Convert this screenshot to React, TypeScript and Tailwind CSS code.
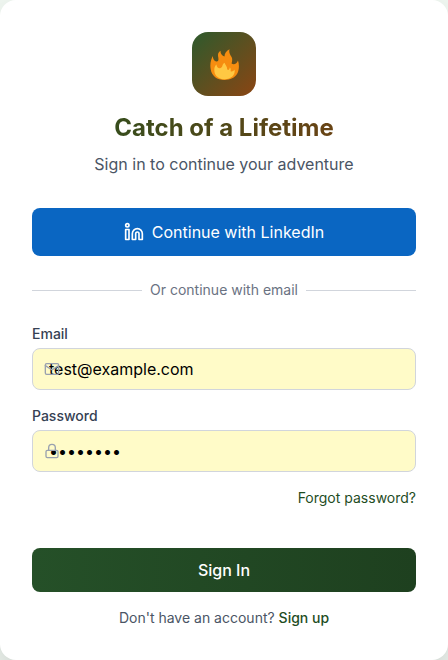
import type { ReactNode } from "react";
import { Linkedin, Lock, Mail } from "lucide-react";

type FieldProps = {
  id: string;
  label: string;
  type: string;
  value: string;
  icon: ReactNode;
};

function Flame() {
  return (
    <svg viewBox="0 0 86 92" className="h-[31px] w-[29px]" aria-hidden="true">
      <path
        fill="#f68d10"
        d="M2 60C-1 44 3 33 8 21C9 31 14 38 20 37C27 36 25 28 24 22C23 14 25 9 31 5C31 15 36 20 43 22C43 13 49 5 58 1C55 10 60 17 64 24C67 30 66 36 64 43C71 49 80 43 83 34C87 45 87 62 81 73C74 86 60 92 43 92C21 92 5 80 2 60Z"
      />
      <path
        fill="#ffc843"
        d="M13 66C12 57 14 50 19 46C20 53 24 58 30 57C39 55 34 47 43 41C45 48 51 52 51 60C54 65 58 60 59 54C62 58 62 62 61 66C66 68 71 65 73 61C76 77 62 90 44 90C27 90 14 80 13 66Z"
      />
    </svg>
  );
}

function Field({ id, label, type, value, icon }: FieldProps) {
  return (
    <div>
      <label htmlFor={id} className="mb-1 block text-sm font-medium text-gray-700">
        {label}
      </label>
      <div className="relative">
        <input
          id={id}
          type={type}
          defaultValue={value}
          className="block w-full rounded-lg border border-gray-300 bg-[#fffbc8] px-4 py-2 text-base text-black outline-none focus:border-[#2d5a2d]"
        />
        <span className="pointer-events-none absolute inset-y-0 left-3 flex items-center text-gray-400">
          {icon}
        </span>
      </div>
    </div>
  );
}

export default function App() {
  return (
    <div className="min-h-screen bg-[#eef5ef] font-['Inter',sans-serif]">
      <main className="mx-auto w-full max-w-md rounded-2xl bg-white p-8 shadow-2xl">
        <header className="mb-8 text-center">
          <div className="mx-auto mb-4 flex size-16 items-center justify-center rounded-2xl bg-linear-to-br/srgb from-[#2d5a2d] to-[#8b4513]">
            <Flame />
          </div>
          <h1 className="bg-linear-to-r/srgb from-[#24501f] to-[#7c4012] bg-clip-text text-2xl font-bold text-transparent">
            Catch of a Lifetime
          </h1>
          <p className="mt-2 text-gray-600">Sign in to continue your adventure</p>
        </header>

        <button
          type="button"
          className="flex w-full items-center justify-center gap-2 rounded-lg bg-[#0a66c2] px-4 py-3 text-white"
        >
          <Linkedin size={20} />
          Continue with LinkedIn
        </button>

        <div className="my-6 flex items-center gap-2">
          <div className="h-px flex-1 bg-gray-300" />
          <span className="text-sm text-gray-500">Or continue with email</span>
          <div className="h-px flex-1 bg-gray-300" />
        </div>

        <form className="space-y-4" onSubmit={(event) => event.preventDefault()}>
          <Field id="email" label="Email" type="email" value="test@example.com" icon={<Mail size={16} />} />
          <Field id="password" label="Password" type="password" value="password" icon={<Lock size={16} />} />
          <div className="flex justify-end text-sm">
            <a href="#forgot" className="text-[#1f4d1f]">
              Forgot password?
            </a>
          </div>
          <button
            type="submit"
            className="mt-6 h-11 w-full rounded-lg bg-linear-to-r/srgb from-[#255028] to-[#1e401f] font-medium text-white"
          >
            Sign In
          </button>
        </form>

        <p className="mt-4 text-center text-sm text-gray-600">
          Don't have an account?{" "}
          <a href="#signup" className="font-medium text-[#1f4d1f]">
            Sign up
          </a>
        </p>
      </main>
    </div>
  );
}
